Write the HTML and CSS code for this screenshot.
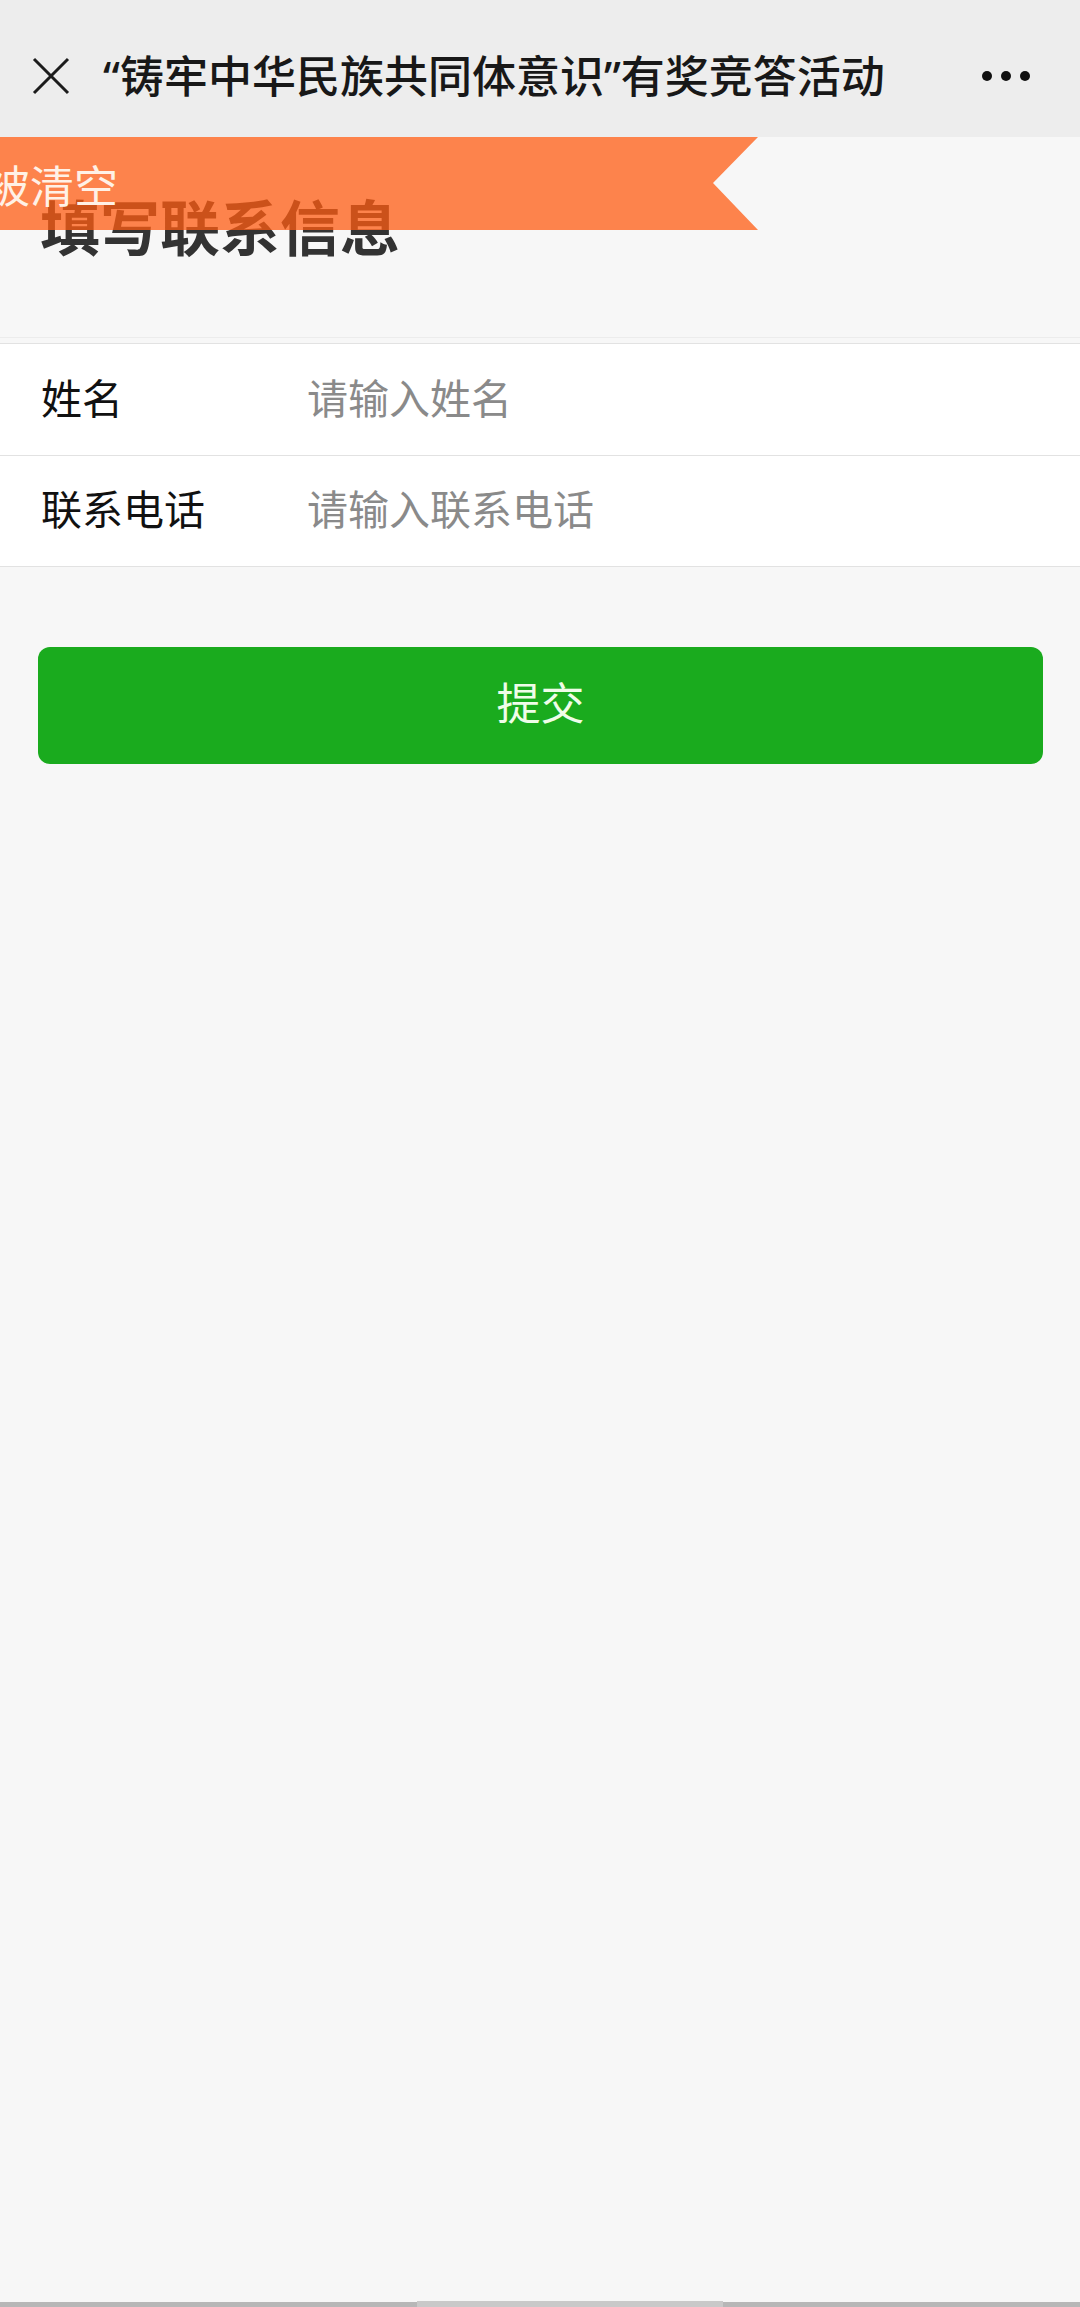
FILE: index.html
```html
<!DOCTYPE html>
<html lang="zh-CN">
<head>
    <meta charset="UTF-8">
    <title>填写联系信息</title>
    <meta name="viewport" content="width=device-width, initial-scale=1.0">
    <link rel="stylesheet" href="styles.css">
</head>
<body>
<!-- 顶部导航栏 -->
<div class="nav-bar">
    <span class="nav-close">
        <svg width="38" height="38" viewBox="0 0 38 38">
            <path d="M2 2 L36 36 M36 2 L2 36" stroke="#1c1c1c" stroke-width="3" fill="none"/>
        </svg>
    </span>
    <span class="nav-title">“铸牢中华民族共同体意识”有奖竞答活动</span>
    <span class="nav-more"><i></i><i></i><i></i></span>
</div>

<div class="page">
    <!-- 滚动提示条，浮在标题上面 -->
    <div class="notice-bar">
        <span class="notice-text">将被清空</span>
    </div>

    <div class="page-title">填写联系信息</div>

    <div class="form-group">
        <div class="form-row">
            <label class="form-label">姓名</label>
            <input class="form-input" type="text" placeholder="请输入姓名">
        </div>
        <div class="form-row">
            <label class="form-label">联系电话</label>
            <input class="form-input" type="tel" placeholder="请输入联系电话">
        </div>
    </div>

    <div class="btn-area">
        <button class="btn-primary">提交</button>
    </div>
</div>

<div class="home-bar"><span></span></div>
</body>
</html>
```

FILE: styles.css
```css
html, body {
    height: 100%;
}

body {
    margin: 0;
    padding: 0;
    display: flex;
    flex-direction: column;
    background: #f7f7f7;
    font-family: "Noto Sans CJK SC", "Noto Sans", sans-serif;
    color: #111;
    overflow: hidden;
}

/* 顶部导航 */
.nav-bar {
    height: 137px;
    flex-shrink: 0;
    display: flex;
    align-items: center;
    background: #ededed;
    padding: 14px 0 0 32px;
    box-sizing: border-box;
}

.nav-close {
    width: 38px;
    height: 38px;
    display: flex;
}

/* 引号用西文字体，宽度窄一些 */
.nav-title {
    margin-left: 33px;
    font-family: "Noto Sans", "Noto Sans CJK SC", sans-serif;
    font-size: 44px;
    font-weight: 500;
    color: #181818;
    white-space: nowrap;
    line-height: 1;
}

.nav-more {
    margin-left: auto;
    margin-right: 50px;
    display: flex;
    gap: 9px;
}

.nav-more i {
    width: 10px;
    height: 10px;
    border-radius: 50%;
    background: #111;
}

/* 内容区 */
.page {
    position: relative;
    flex: 1;
}

.notice-bar {
    position: absolute;
    top: 0;
    left: 0;
    z-index: 2;
    width: 758px;
    height: 93px;
    display: flex;
    align-items: center;
    overflow: hidden;
    background: rgba(255, 92, 19, 0.75);
    clip-path: polygon(0 0, 758px 0, 713px 46px, 758px 93px, 0 93px);
}

.notice-text {
    margin-left: -58px;
    font-size: 44px;
    color: #fff1e6;
    white-space: nowrap;
    line-height: 1;
}

.page-title {
    height: 201px;
    box-sizing: border-box;
    padding: 58px 0 0 40px;
    font-size: 60px;
    font-weight: bold;
    line-height: 1;
    color: #333;
    border-bottom: 1px solid #ececec;
}

.form-group {
    margin-top: 5px;
    background: #fff;
    border-top: 1px solid #e2e2e2;
    border-bottom: 1px solid #e2e2e2;
}

.form-row {
    height: 111px;
    box-sizing: border-box;
    display: flex;
    align-items: center;
    padding: 0 41px 8px;
}

.form-row + .form-row {
    border-top: 1px solid #e2e2e2;
}

.form-label {
    width: 266px;
    flex-shrink: 0;
    font-size: 41px;
    color: #111;
}

.form-input {
    flex: 1;
    border: none;
    outline: none;
    background: transparent;
    padding: 0;
    font-family: inherit;
    font-size: 41px;
    color: #111;
}

.form-input::placeholder {
    color: #8a8a8a;
}

.btn-area {
    padding: 80px 37px 0 38px;
}

.btn-primary {
    display: block;
    width: 100%;
    height: 117px;
    padding: 0 0 10px;
    border: none;
    border-radius: 12px;
    background: #1aab1e;
    color: #effde9;
    font-family: inherit;
    font-size: 44px;
}

/* 底部指示条 */
.home-bar {
    height: 5px;
    flex-shrink: 0;
    background: #b7b7b7;
    display: flex;
    justify-content: center;
    align-items: flex-end;
}

.home-bar span {
    width: 306px;
    height: 6px;
    margin-left: 60px;
    background: #c9c9c9;
}
```
